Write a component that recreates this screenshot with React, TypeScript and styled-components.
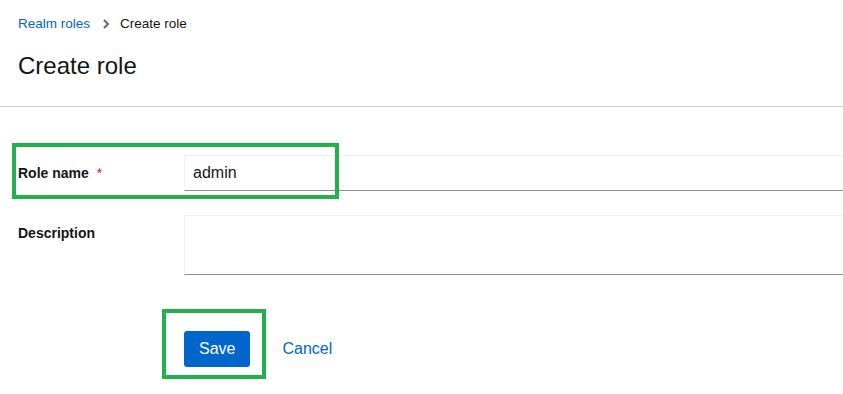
import React from "react";
import styled, { createGlobalStyle } from "styled-components";

const GlobalStyle = createGlobalStyle`
  html, body {
    margin: 0;
    padding: 0;
    background: #fff;
    overflow: hidden;
  }
  body {
    font-family: "Liberation Sans", Arial, sans-serif;
    color: #151515;
  }
`;

const Page = styled.div`
  width: 843px;
  height: 394px;
  overflow: hidden;
`;

const Header = styled.section`
  padding: 13px 18px 25px;
  border-bottom: 1px solid #d2d2d2;
`;

const Breadcrumb = styled.nav`
  display: flex;
  align-items: center;
  font-size: 13.5px;
  line-height: 21px;
`;

const Crumb = styled.a`
  color: #06c;
  text-decoration: none;
`;

const Current = styled.span`
  color: #151515;
`;

const Divider = styled.span`
  display: flex;
  align-items: center;
  margin: 0 10px 0 12px;
`;

const Title = styled.h1`
  margin: 16px 0 0;
  font-size: 24px;
  font-weight: 400;
  line-height: 31px;
`;

const Form = styled.form`
  position: relative;
  padding: 48px 0 0 18px;
  width: 900px;
`;

const Row = styled.div<{ $gap?: number }>`
  display: grid;
  grid-template-columns: 166px 1fr;
  margin-bottom: ${(p) => p.$gap ?? 0}px;
`;

const Label = styled.label`
  padding-top: 8px;
  font-size: 14px;
  line-height: 21px;
  font-weight: 700;
`;

const Required = styled.span`
  margin-left: 8px;
  color: #c9190b;
  font-weight: 400;
`;

const Input = styled.input`
  box-sizing: border-box;
  height: 36px;
  padding: 0 8px;
  border: 1px solid #f0f0f0;
  border-bottom-color: #8a8d90;
  font: 16px "Liberation Sans", Arial, sans-serif;
  color: #151515;
  outline: none;
`;

const TextArea = styled.textarea`
  box-sizing: border-box;
  height: 60px;
  padding: 6px 8px;
  border: 1px solid #f0f0f0;
  border-bottom-color: #8a8d90;
  font: 16px "Liberation Sans", Arial, sans-serif;
  resize: none;
  outline: none;
`;

const Actions = styled.div`
  display: flex;
  align-items: center;
  gap: 16px;
  margin-top: 56px;
  padding-left: 166px;
`;

const Button = styled.button<{ $variant: "primary" | "link" }>`
  height: 36px;
  padding: 0 ${(p) => (p.$variant === "primary" ? 15 : 16)}px;
  border: none;
  border-radius: 3px;
  font: 16px "Liberation Sans", Arial, sans-serif;
  cursor: pointer;
  background: ${(p) => (p.$variant === "primary" ? "#06c" : "transparent")};
  color: ${(p) => (p.$variant === "primary" ? "#fff" : "#06c")};
`;

const Highlight = styled.div<{ $top: number; $left: number; $w: number; $h: number }>`
  position: absolute;
  top: ${(p) => p.$top}px;
  left: ${(p) => p.$left}px;
  width: ${(p) => p.$w}px;
  height: ${(p) => p.$h}px;
  box-sizing: border-box;
  border: 4px solid #22b14c;
  pointer-events: none;
`;

const Chevron = () => (
  <svg width="8" height="10" viewBox="0 0 8 10">
    <path d="M2 1 L6 5 L2 9" fill="none" stroke="#6a6e73" strokeWidth="2.2" />
  </svg>
);

export default function App() {
  return (
    <Page>
      <GlobalStyle />
      <Header>
        <Breadcrumb>
          <Crumb href="#">Realm roles</Crumb>
          <Divider>
            <Chevron />
          </Divider>
          <Current>Create role</Current>
        </Breadcrumb>
        <Title>Create role</Title>
      </Header>
      <Form onSubmit={(e) => e.preventDefault()}>
        <Row $gap={24}>
          <Label>
            Role name<Required>*</Required>
          </Label>
          <Input defaultValue="admin" />
        </Row>
        <Row>
          <Label>Description</Label>
          <TextArea />
        </Row>
        <Actions>
          <Button $variant="primary">Save</Button>
          <Button $variant="link">Cancel</Button>
        </Actions>
        <Highlight $top={36} $left={12} $w={327} $h={56} />
        <Highlight $top={202} $left={162} $w={104} $h={70} />
      </Form>
    </Page>
  );
}
